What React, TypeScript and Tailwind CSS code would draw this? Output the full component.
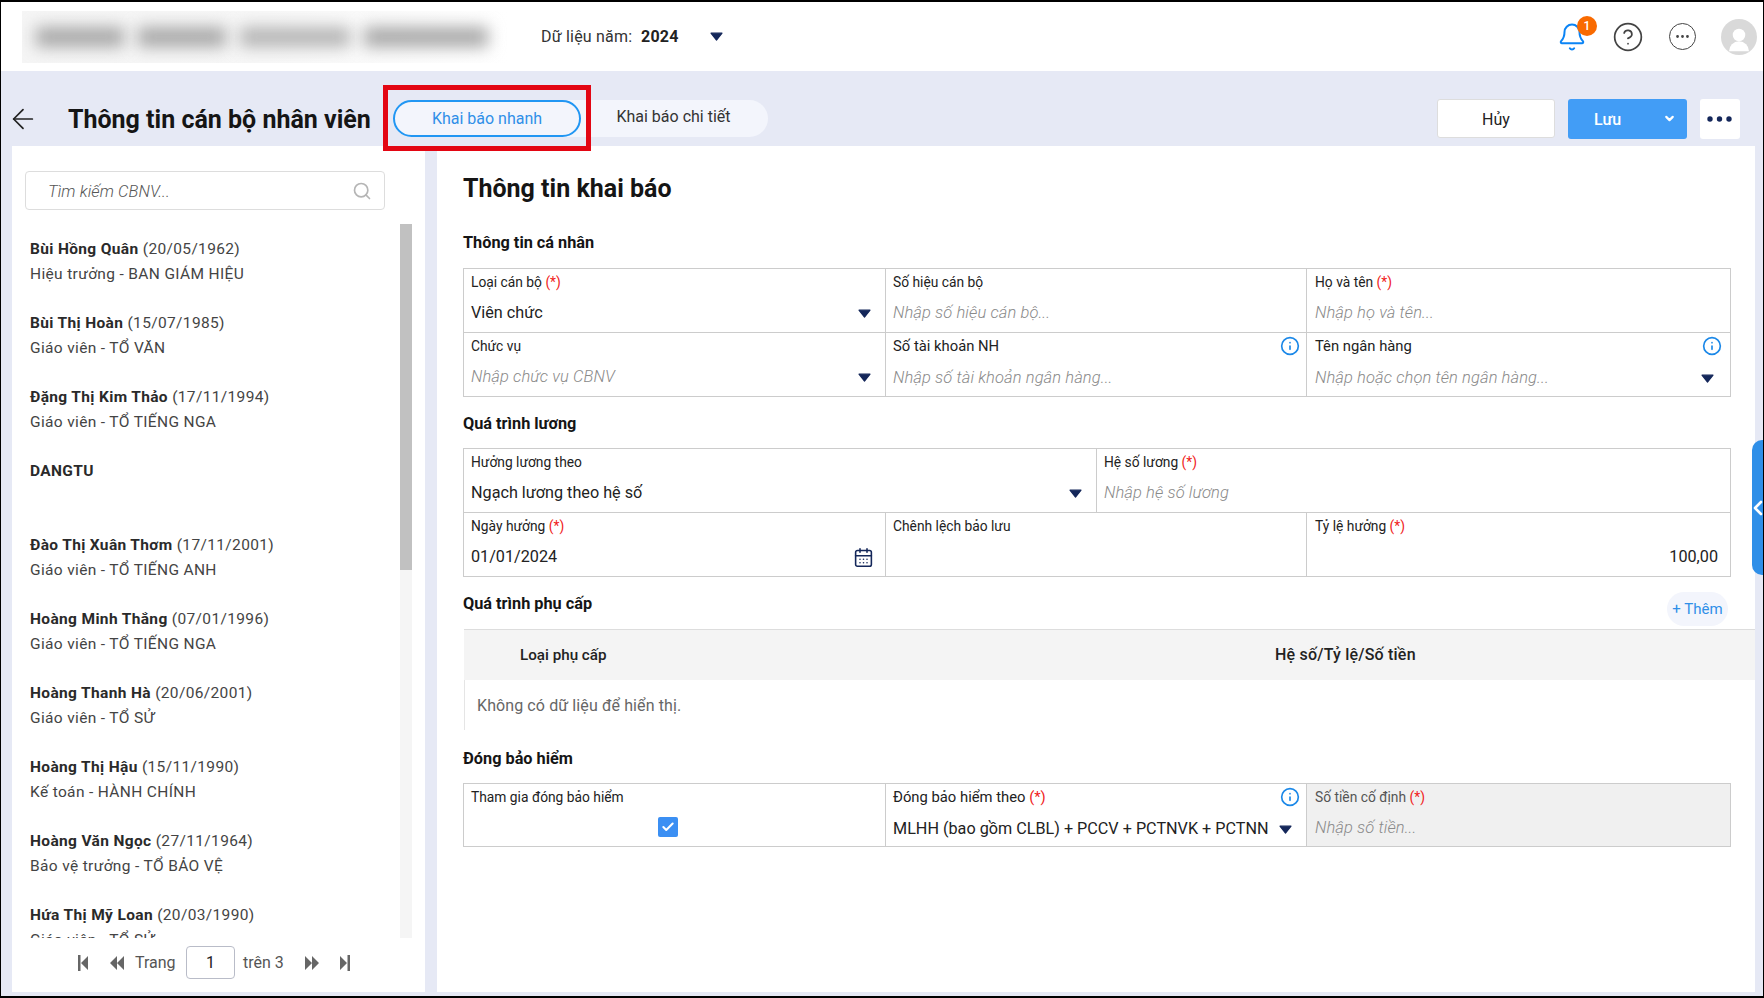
import { ArrowLeft, Bell, CalendarDays, Check, ChevronDown, ChevronLeft, CircleHelp, Ellipsis, Info, Search, UserRound } from "lucide-react";
import type { ReactNode } from "react";

const staff = [
  { name: "Bùi Hồng Quân", dob: "(20/05/1962)", role: "Hiệu trưởng - BAN GIÁM HIỆU" },
  { name: "Bùi Thị Hoàn", dob: "(15/07/1985)", role: "Giáo viên - TỔ VĂN" },
  { name: "Đặng Thị Kim Thảo", dob: "(17/11/1994)", role: "Giáo viên - TỔ TIẾNG NGA" },
  { name: "DANGTU", dob: "", role: "" },
  { name: "Đào Thị Xuân Thơm", dob: "(17/11/2001)", role: "Giáo viên - TỔ TIẾNG ANH" },
  { name: "Hoàng Minh Thắng", dob: "(07/01/1996)", role: "Giáo viên - TỔ TIẾNG NGA" },
  { name: "Hoàng Thanh Hà", dob: "(20/06/2001)", role: "Giáo viên - TỔ SỬ" },
  { name: "Hoàng Thị Hậu", dob: "(15/11/1990)", role: "Kế toán - HÀNH CHÍNH" },
  { name: "Hoàng Văn Ngọc", dob: "(27/11/1964)", role: "Bảo vệ trưởng - TỔ BẢO VỆ" },
  { name: "Hứa Thị Mỹ Loan", dob: "(20/03/1990)", role: "Giáo viên - TỔ SỬ" },
];

function Caret({ className = "" }: { className?: string }) {
  return (
    <svg width="13" height="9" viewBox="0 0 13 9" className={`shrink-0 ${className}`}>
      <path d="M1 1.2h11L6.5 8z" fill="#14275a" stroke="#14275a" strokeWidth="1.2" strokeLinejoin="round" />
    </svg>
  );
}

function Req() {
  return <span className="text-[#f01b1b]"> (*)</span>;
}

type FieldProps = {
  label: ReactNode;
  value?: ReactNode;
  placeholder?: string;
  caret?: boolean;
  info?: boolean;
  last?: boolean;
  first?: boolean;
  icon?: ReactNode;
  right?: boolean;
  muted?: boolean;
};

function Field({ label, value, placeholder, caret, info, last, first, icon, right, muted }: FieldProps) {
  return (
    <div className={`h-full min-w-0 pt-[3px] ${first ? "pl-[7px]" : last ? "border-l border-[#cccccc] pl-[8px]" : "border-l border-[#cccccc] pl-[7px]"} ${muted ? "bg-[#f0f0f0]" : ""}`}>
      <div className={`flex h-5 items-center justify-between leading-5 ${info ? "text-[14.8px]" : "text-[13.8px]"} ${muted ? "text-[#555555]" : "text-[#222222]"} ${last ? "pr-[8px]" : "pr-[6px]"}`}>
        <span>{label}</span>
        {info && <Info size={20} strokeWidth={2} className="text-[#1b88e8]" />}
      </div>
      <div className={`flex h-6 items-center justify-between text-[16.2px] leading-6 ${info ? "mt-[10px]" : "mt-[9px]"} ${last ? "pr-[16px]" : "pr-[14px]"}`}>
        {placeholder ? (
          <span className="text-[16.5px] font-light italic tracking-[0.1px] text-[#8a8a8a]">{placeholder}</span>
        ) : right ? (
          <span className="ml-auto -mr-[4px] text-[#222222]">{value}</span>
        ) : (
          <span className="text-[#222222]">{value}</span>
        )}
        {caret && <Caret />}
        {icon}
      </div>
    </div>
  );
}

function Heading({ children, className = "" }: { children: ReactNode; className?: string }) {
  return <h3 className={`h-6 text-[16.3px] font-bold leading-6 text-[#151515] ${className}`}>{children}</h3>;
}

function PageIcon({ type }: { type: "first" | "prev" | "next" | "last" }) {
  const paths = {
    first: "M0 0h2.5v16H0zM10 1v14L3 8z",
    prev: "M7 1v14L0 8zM14 1v14L7 8z",
    next: "M0 1v14l7-7zM7 1v14l7-7z",
    last: "M0 1v14l7-7zM7.5 0H10v16H7.5z",
  };
  const w = type === "first" || type === "last" ? 10 : 14;
  return (
    <svg width={w} height="16" viewBox={`0 0 ${w} 16`} className="block shrink-0">
      <path d={paths[type]} fill="#666666" />
    </svg>
  );
}

export default function App() {
  return (
    <div className="relative flex h-[998px] w-[1764px] flex-col overflow-hidden border-x border-b-2 border-t-2 border-black bg-[#e6e9f5] [font-family:Roboto,sans-serif] text-[#222222]">
      {/* top bar */}
      <header className="flex h-[69px] shrink-0 items-center bg-white">
        <div className="ml-[21px] flex h-[52px] w-[488px] items-center gap-[14px] overflow-hidden bg-gradient-to-r from-[#f5f5f5] via-[#f7f7f7] to-white pl-[14px]">
          <div className="h-[20px] w-[88px] bg-[#a8a8a8] blur-[8px]" />
          <div className="h-[20px] w-[88px] bg-[#a8a8a8] blur-[8px]" />
          <div className="h-[20px] w-[110px] bg-[#b5b5b5] blur-[8px]" />
          <div className="h-[20px] w-[124px] bg-[#a8a8a8] blur-[8px]" />
        </div>
        <span className="ml-[31px] w-[100px] text-[16px] tracking-[0.2px] text-[#333333]">Dữ liệu năm:</span>
        <span className="w-[69px] text-[16px] font-bold tracking-[0.2px] text-[#222222]">2024</span>
        <Caret />
        <div className="ml-auto flex items-center pr-[6px]">
          <div className="relative mr-[25px]">
            <Bell size={30} strokeWidth={1.6} className="text-[#0b84f5]" />
            <span className="absolute -right-[10px] -top-[6px] flex h-5 w-5 items-center justify-center rounded-full bg-[#f96a00] text-[12px] font-medium text-white">1</span>
          </div>
          <CircleHelp size={32} strokeWidth={1.3} className="mr-[25px] text-[#444444]" />
          <div className="mr-[25px] flex h-[27px] w-[27px] items-center justify-center rounded-full border-[1.5px] border-[#444444]">
            <Ellipsis size={17} strokeWidth={2} className="text-[#444444]" />
          </div>
          <div className="flex h-9 w-9 items-center justify-center overflow-hidden rounded-full bg-[#d9d9d9]">
            <UserRound size={30} strokeWidth={0} fill="white" className="mt-[6px]" />
          </div>
        </div>
      </header>

      {/* title row */}
      <div className="flex h-[75px] shrink-0 items-start pr-[23px] pt-[28px]">
        <div className="flex h-10 w-[67px] items-center pl-[6px]">
          <ArrowLeft size={32} strokeWidth={1.3} className="text-[#222222]" />
        </div>
        <h1 className="h-10 w-[325px] whitespace-nowrap text-[25px] font-bold leading-[42px] text-[#151515]">Thông tin cán bộ nhân viên</h1>
        <div className="mt-[1px] flex h-[37px] w-[375px] rounded-full bg-[#f3f5fc] text-[16px]">
          <div className="flex w-[188px] items-center justify-center rounded-full border-2 border-[#2196f3] text-[#2f8fe8]">Khai báo nhanh</div>
          <div className="flex flex-1 items-center justify-center pb-[3px] pr-[2px] text-[#333333]">Khai báo chi tiết</div>
        </div>
        <div className="ml-auto flex gap-[13px]">
          <button className="flex h-[39px] w-[118px] items-center justify-center rounded-[3px] border border-[#dddddd] bg-white pt-[2px] text-[16px] text-[#222222]">Hủy</button>
          <button className="relative flex h-10 w-[119px] items-center rounded-[3px] bg-[#429df6] pl-[26px] pt-[1px] text-[16px] font-medium text-white">
            Lưu
            <ChevronDown size={13} strokeWidth={4} className="absolute right-[11px] top-[13px]" />
          </button>
          <button className="flex h-10 w-10 items-center justify-center rounded-[3px] bg-white">
            <svg width="26" height="6" viewBox="0 0 26 6">
              <circle cx="3" cy="3" r="2.7" fill="#14275a" />
              <circle cx="12.5" cy="3" r="2.7" fill="#14275a" />
              <circle cx="22" cy="3" r="2.7" fill="#14275a" />
            </svg>
          </button>
        </div>
      </div>

      {/* panels */}
      <div className="flex h-[846px] shrink-0 gap-[12px] pl-[11px]">
        <aside className="flex w-[413px] shrink-0 flex-col bg-white">
          <div className="ml-[13px] mt-[25px] flex h-[39px] w-[360px] shrink-0 items-center justify-between rounded-[4px] border border-[#dddddd] pl-[22px] pr-[12px]">
            <span className="pt-[3px] text-[16.5px] font-light italic tracking-[0.1px] text-[#555555]">Tìm kiếm CBNV...</span>
            <Search size={20} strokeWidth={2} className="text-[#b5b5b5]" />
          </div>
          <div className="mt-[14px] flex h-[714px] shrink-0 overflow-hidden pr-[13px]">
            <ul className="flex-1 overflow-hidden pl-[18px] pt-[13px]">
              {staff.map((s) => (
                <li key={s.name} className="h-[74px] shrink-0 text-[15.5px] leading-[25px] tracking-[0.35px]">
                  <div className="whitespace-nowrap text-[#444444]">
                    <span className="font-bold text-[#2a2a2a]">{s.name}</span> {s.dob}
                  </div>
                  <div className="whitespace-nowrap text-[#444444]">{s.role}</div>
                </li>
              ))}
            </ul>
            <div className="w-3 shrink-0 bg-[#f5f5f5]">
              <div className="h-[346px] bg-[#c1c1c1]" />
            </div>
          </div>
          <div className="flex items-center whitespace-nowrap pl-[66px] pt-[8px] text-[16px] text-[#555555]">
            <PageIcon type="first" />
            <span className="ml-[22px]"><PageIcon type="prev" /></span>
            <span className="ml-[11px] w-[40px]">Trang</span>
            <div className="ml-[11px] flex h-[33px] w-[49px] items-center justify-center rounded-[4px] border border-[#b9bcc8] text-[#222222]">1</div>
            <span className="ml-[8px] w-[41px]">trên 3</span>
            <span className="ml-[21px]"><PageIcon type="next" /></span>
            <span className="ml-[21px]"><PageIcon type="last" /></span>
          </div>
        </aside>

        <main className="w-[1318px] shrink-0 bg-white pl-[26px] pt-[27px]">
          <div className="w-[1268px]">
            <h2 className="h-[30px] text-[25px] font-bold leading-[32px] text-[#151515]">Thông tin khai báo</h2>

            <Heading className="mt-[28px]">Thông tin cá nhân</Heading>
            <div className="mt-[13px] border border-[#cccccc]">
              <div className="grid h-[63px] grid-cols-[421px_421px_1fr]">
                <Field first caret label={<>Loại cán bộ<Req /></>} value="Viên chức" />
                <Field label="Số hiệu cán bộ" placeholder="Nhập số hiệu cán bộ..." />
                <Field last label={<>Họ và tên<Req /></>} placeholder="Nhập họ và tên..." />
              </div>
              <div className="grid h-[64px] grid-cols-[421px_421px_1fr] border-t border-[#cccccc]">
                <Field first caret label="Chức vụ" placeholder="Nhập chức vụ CBNV" />
                <Field info label="Số tài khoản NH" placeholder="Nhập số tài khoản ngân hàng..." />
                <Field info last caret label="Tên ngân hàng" placeholder="Nhập hoặc chọn tên ngân hàng..." />
              </div>
            </div>

            <Heading className="mt-[15px]">Quá trình lương</Heading>
            <div className="mt-[12px] border border-[#cccccc]">
              <div className="grid h-[63px] grid-cols-[632px_1fr]">
                <Field first caret label="Hưởng lương theo" value="Ngạch lương theo hệ số" />
                <Field label={<>Hệ số lương<Req /></>} placeholder="Nhập hệ số lương" />
              </div>
              <div className="grid h-[64px] grid-cols-[421px_421px_1fr] border-t border-[#cccccc]">
                <Field first label={<>Ngày hưởng<Req /></>} value="01/01/2024" icon={<CalendarDays size={21} strokeWidth={1.8} className="-mr-[3px] text-[#14275a]" />} />
                <Field label="Chênh lệch bảo lưu" value="" />
                <Field last right label={<>Tỷ lệ hưởng<Req /></>} value="100,00" />
              </div>
            </div>

            <div className="mt-[15px] flex h-[37px] items-start justify-between pr-[3px]">
              <Heading>Quá trình phụ cấp</Heading>
              <button className="h-[34px] w-[61px] rounded-full bg-[#f3f5fc] text-[15px] text-[#2f8fe8]">+ Thêm</button>
            </div>
            <div className="-mr-[24px] ml-[1px]">
              <div className="grid h-[51px] grid-cols-[811px_1fr] items-center border-t border-[#dddddd] bg-[#f4f4f4] font-medium text-[#222222]">
                <span className="pl-[56px] text-[15.2px]">Loại phụ cấp</span>
                <span className="text-[16px] tracking-[0.2px]">Hệ số/Tỷ lệ/Số tiền</span>
              </div>
              <div className="flex h-[50px] items-center border-l border-[#e5e5e5] pl-[12px] pt-[1px] text-[16px] tracking-[0.1px] text-[#666666]">Không có dữ liệu để hiển thị.</div>
            </div>

            <Heading className="mt-[17px]">Đóng bảo hiểm</Heading>
            <div className="mt-[12px] border border-[#cccccc]">
              <div className="grid h-[62px] grid-cols-[421px_421px_1fr]">
                <div className="h-full pl-[7px] pt-[3px]">
                  <div className="h-5 text-[13.8px] leading-5 text-[#222222]">Tham gia đóng bảo hiểm</div>
                  <div className="ml-[187px] mt-[10px] flex h-5 w-5 items-center justify-center rounded-[2px] bg-[#3b8ff3]">
                    <Check size={14} strokeWidth={3.5} className="text-white" />
                  </div>
                </div>
                <Field info caret label={<>Đóng bảo hiểm theo<Req /></>} value="MLHH (bao gồm CLBL) + PCCV + PCTNVK + PCTNN" />
                <Field muted last label={<>Số tiền cố định<Req /></>} placeholder="Nhập số tiền..." />
              </div>
            </div>
          </div>
        </main>
      </div>

      {/* overlays */}
      <div className="absolute left-[382px] top-[83px] h-[66px] w-[208px] border-[5px] border-[#e30613]" />
      <div className="absolute right-0 top-[438px] flex h-[135px] w-[11px] items-center rounded-l-[10px] bg-[#2f8fe8]">
        <ChevronLeft size={24} strokeWidth={2.6} className="-ml-[6px] shrink-0 text-white" />
      </div>
    </div>
  );
}
